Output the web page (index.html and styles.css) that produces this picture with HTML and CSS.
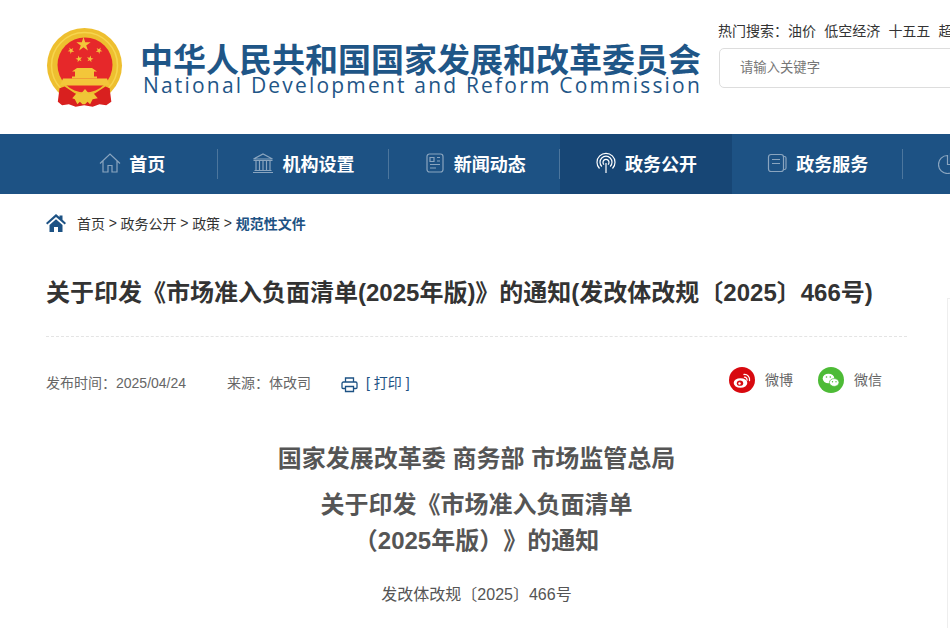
FILE: index.html
```html
<!DOCTYPE html>
<html lang="zh-CN">
<head>
  <meta charset="UTF-8" />
  <title>关于印发《市场准入负面清单(2025年版)》的通知</title>
  <link rel="stylesheet" href="styles.css">
</head>
<body>
  <header class="top">
    <div class="brand">
      <svg class="emblem" viewBox="0 0 80 84" width="80" height="84">
        <defs>
          <polygon id="star" points="0,-1 .225,-.309 .951,-.309 .363,.118 .588,.809 0,.382 -.588,.809 -.363,.118 -.951,-.309 -.225,-.309"/>
        </defs>
        <circle cx="38.500" cy="38.500" r="37.500" fill="#eebf2f"/>
        <circle cx="38.500" cy="38.500" r="33" fill="none" stroke="#f7d54e" stroke-width="1.500"/>
        <circle cx="39" cy="38" r="27.500" fill="#e6282a"/>
        <g fill="#f3c63a">
          <use href="#star" transform="translate(37.500 17.500) scale(7.500)"/>
          <use href="#star" transform="translate(25 23.500) rotate(-30) scale(3.500)"/>
          <use href="#star" transform="translate(53 23.500) rotate(30) scale(3.500)"/>
          <use href="#star" transform="translate(33 32) rotate(-12) scale(3.500)"/>
          <use href="#star" transform="translate(44 32) rotate(12) scale(3.500)"/>
          <path d="M31 41h15l5 3.500h-3v5h3v2H26v-2h3v-5h-3z"/>
          <path d="M17 51.500h44l3 7H14z"/>
        </g>
        <g transform="translate(39 62) scale(.85) translate(-39 -62)">
          <path d="M9 61l6-2 12 8 5 2h14l5-2 12-8 5 2 2 16-6 4-8-1-8 3-10-2-10 2-8-3-8 1-5-4z" fill="#d9201f"/>
          <path d="M24 73l5-6 5 1 5-6 5 6 5-1 5 6-6 1-3 6-3-3-3 3-3 0-3-3-3 3-3-6z" fill="#f0c537"/>
        </g>
      </svg>
      <div class="brand-text">
        <div class="brand-cn">中华人民共和国国家发展和改革委员会</div>
        <div class="brand-en">National Development and Reform Commission</div>
      </div>
    </div>
    <div class="search">
      <div class="hot">
        <span>热门搜索：</span><span>油价</span><span>低空经济</span><span>十五五</span><span>超长期特别国债</span>
      </div>
      <div class="search-box">请输入关键字</div>
    </div>
  </header>

  <nav class="nav">
    <a class="nav-item">
      <svg viewBox="0 0 22 22" width="22" height="22"><path d="M1 11.500 11 2l10 9.500M4 9v11h5v-6.500h4V20h5V9"/></svg>
      首页
    </a>
    <a class="nav-item">
      <svg viewBox="0 0 22 22" width="22" height="22"><path d="M1.500 7 11 2l9.500 5zM1.500 8.500h19M4 9v9M7.500 9v9M11 9v9M14.500 9v9M18 9v9M2.500 18.500h17M1 20.500h20"/></svg>
      机构设置
    </a>
    <a class="nav-item">
      <svg viewBox="0 0 22 22" width="22" height="22"><rect x="3" y="2" width="16" height="18" rx="2.500"/><path d="M6 5.500h4v4H6zM13 5.500h3M13 9h3M6 12.500h10M6 16h6"/></svg>
      新闻动态
    </a>
    <a class="nav-item active">
      <svg viewBox="0 0 22 22" width="22" height="22"><path d="M11 11v10M4.500 16.500a9 9 0 1 1 13 0M6.800 14.500a6 6 0 1 1 8.400 0M9 12.600a3 3 0 1 1 4 0"/></svg>
      政务公开
    </a>
    <a class="nav-item">
      <svg viewBox="0 0 22 22" width="22" height="22"><rect x="2.500" y="2.500" width="15" height="17" rx="2.500"/><path d="M17.500 4.500h1a1.500 1.500 0 0 1 1.500 1.500v10a1.500 1.500 0 0 1-1.500 1.500h-1M6 7.500h8M6 11.500h8"/></svg>
      政务服务
    </a>
    <a class="nav-item">
      <svg viewBox="0 0 22 22" width="22" height="22"><path d="M9.500 3.500a9 9 0 1 0 9 9h-9zM12.500 1.500v8h8a8 8 0 0 0-8-8z"/></svg>
      数据发布
    </a>
  </nav>

  <main class="page">
    <div class="crumbs">
      <svg viewBox="0 0 20 18" width="20" height="18"><path d="M10 0 0 9l1.300 1.500L10 3l8.700 7.500L20 9l-3.500-3.200V1.500h-3v1.600z"/><path d="M3.500 11 10 5.200l6.500 5.800v7h-4.500v-5H8v5H3.500z"/></svg>
      <span>首页</span><i>&gt;</i><span>政务公开</span><i>&gt;</i><span>政策</span><i>&gt;</i><b>规范性文件</b>
    </div>

    <h1 class="title">关于印发《市场准入负面清单(2025年版)》的通知(发改体改规〔2025〕466号)</h1>

    <div class="meta">
      <div class="meta-left">
        <span class="date">发布时间：2025/04/24</span>
        <span class="source">来源：体改司</span>
        <span class="print">
          <svg viewBox="0 0 17 17" width="17" height="17"><path d="M4.500 6V2h8v4M4.500 12.500H2a1 1 0 0 1-1-1V7.500A1.500 1.500 0 0 1 2.500 6h12A1.500 1.500 0 0 1 16 7.500v4a1 1 0 0 1-1 1h-2.500M4.500 10.500h8v5h-8z"/></svg>
          [ 打印 ]
        </span>
      </div>
      <div class="share">
        <span class="share-item">
          <svg viewBox="0 0 26 26" width="26" height="26"><circle cx="13" cy="13" r="13" fill="#d8090f"/><ellipse cx="11.500" cy="16" rx="6.800" ry="4.800" fill="#fff"/><ellipse cx="11" cy="16.200" rx="3.200" ry="2.600" fill="#d8090f"/><circle cx="10.500" cy="16.500" r="1.200" fill="#fff"/><path d="M15 7.500a5 5 0 0 1 5.500 6M15.500 10.200a2.500 2.500 0 0 1 2.500 3" fill="none" stroke="#fff" stroke-width="1.300" stroke-linecap="round"/></svg>
          微博
        </span>
        <span class="share-item">
          <svg viewBox="0 0 26 26" width="26" height="26"><circle cx="13" cy="13" r="13" fill="#4dbb36"/><ellipse cx="10.500" cy="11.500" rx="5.800" ry="4.800" fill="#fff"/><ellipse cx="16.200" cy="15.500" rx="4.800" ry="3.900" fill="#fff" stroke="#4dbb36" stroke-width=".7"/><circle cx="8.500" cy="10" r=".8" fill="#4dbb36"/><circle cx="12.300" cy="10" r=".8" fill="#4dbb36"/><circle cx="14.500" cy="14.700" r=".7" fill="#4dbb36"/><circle cx="18" cy="14.700" r=".7" fill="#4dbb36"/></svg>
          微信
        </span>
      </div>
    </div>

    <article class="doc">
      <h2>国家发展改革委 商务部 市场监管总局</h2>
      <h2>关于印发《市场准入负面清单<br>（2025年版）》的通知</h2>
      <p class="doc-no">发改体改规〔2025〕466号</p>
    </article>
  </main>
  <div class="side-line"></div>
</body>
</html>
```
FILE: styles.css
```css
* {
  box-sizing: border-box;
}

html, body {
  height: 100%;
  overflow: hidden;
}

body {
  position: relative;
  margin: 0;
  width: 950px;
  background: #fff;
  color: #333;
  font-family: "Liberation Sans", "Noto Sans CJK SC", sans-serif;
}

.top {
  display: flex;
  height: 134px;
  padding: 18px 0 0 46px;
}

.brand {
  flex: none;
  display: flex;
  width: 673px;
  padding-top: 9px;
}

.emblem {
  flex: none;
}

.brand-text {
  margin: 14px 0 0 14px;
  white-space: nowrap;
}

.brand-cn {
  font-family: "Noto Sans CJK SC", sans-serif;
  font-size: 33px;
  line-height: 34px;
  font-weight: 700;
  color: #1f5687;
}

.brand-en {
  padding-left: 3px;
  font-family: "Open Sans", sans-serif;
  font-size: 21px;
  line-height: 20px;
  letter-spacing: 2.190px;
  color: #1f5687;
}

.search {
  flex: none;
  width: 400px;
}

.hot {
  display: flex;
  gap: 8.200px;
  height: 30px;
  margin-left: -1px;
  font-size: 14px;
  line-height: 27px;
  white-space: nowrap;
}

.hot span:first-child {
  margin-right: -8.200px;
}

.search-box {
  width: 400px;
  height: 40px;
  border: 1px solid #ddd;
  border-radius: 5px;
  padding-left: 20px;
  font-size: 13.333px;
  line-height: 38px;
  color: #777;
}

.nav {
  display: flex;
  height: 60px;
  padding-left: 46.500px;
  background: #1d5284;
}

.nav-item {
  flex: none;
  position: relative;
  display: flex;
  align-items: center;
  justify-content: center;
  gap: 8px;
  width: 171.300px;
  padding-bottom: 2px;
  font-size: 18px;
  font-weight: 700;
  color: #fff;
  white-space: nowrap;
}

.nav-item::after {
  content: "";
  position: absolute;
  right: 0;
  top: 15px;
  height: 30px;
  border-right: 1px solid #4c769d;
}

.nav-item svg {
  fill: none;
  stroke: #8aa5bf;
  stroke-width: 1.200;
}

.nav-item.active {
  background: #174675;
}

.nav-item.active::after {
  display: none;
}

.nav-item.active svg {
  stroke: #fff;
}

.page {
  padding: 0 43px 0 46px;
}

.crumbs {
  display: flex;
  align-items: center;
  height: 58px;
  font-size: 14px;
  color: #333;
}

.crumbs svg {
  fill: #1d5284;
  margin-right: 11px;
}

.crumbs i {
  font-style: normal;
  margin: 0 3.700px;
}

.crumbs b {
  color: #1d5284;
}

.title {
  margin: 0;
  padding-top: 25px;
  height: 85px;
  border-bottom: 1px dashed #e4e4e4;
  font-size: 24px;
  line-height: 32px;
  font-weight: 700;
  color: #333;
  white-space: nowrap;
}

.meta {
  display: flex;
  justify-content: space-between;
  align-items: center;
  height: 86px;
  font-size: 14px;
  color: #666;
}

.meta-left {
  display: flex;
  align-items: center;
  padding-top: 4px;
}

.date {
  width: 181px;
}

.source {
  width: 114px;
}

.print {
  display: flex;
  align-items: center;
  gap: 8px;
  color: #1d5284;
}

.print svg {
  fill: none;
  stroke: #1d5284;
  stroke-width: 1.300;
  margin-top: 4px;
}

.share {
  display: flex;
  gap: 25px;
  padding-right: 25px;
}

.share-item {
  display: flex;
  align-items: center;
  gap: 10px;
  line-height: 24px;
}

.doc {
  padding-top: 18px;
  text-align: center;
  color: #555;
}

.doc h2 {
  margin: 0;
  font-size: 24px;
  line-height: 36px;
  font-weight: 700;
  color: #555;
  text-spacing-trim: space-all;
}

.doc h2 + h2 {
  margin-top: 10px;
}

.doc-no {
  margin: 22px 0 0;
  font-size: 16px;
  line-height: 28px;
}

.side-line {
  position: absolute;
  left: 947px;
  top: 298px;
  right: 0;
  bottom: 0;
  border: 1px solid #eee;
  border-width: 1px 0 0 1px;
}
```
